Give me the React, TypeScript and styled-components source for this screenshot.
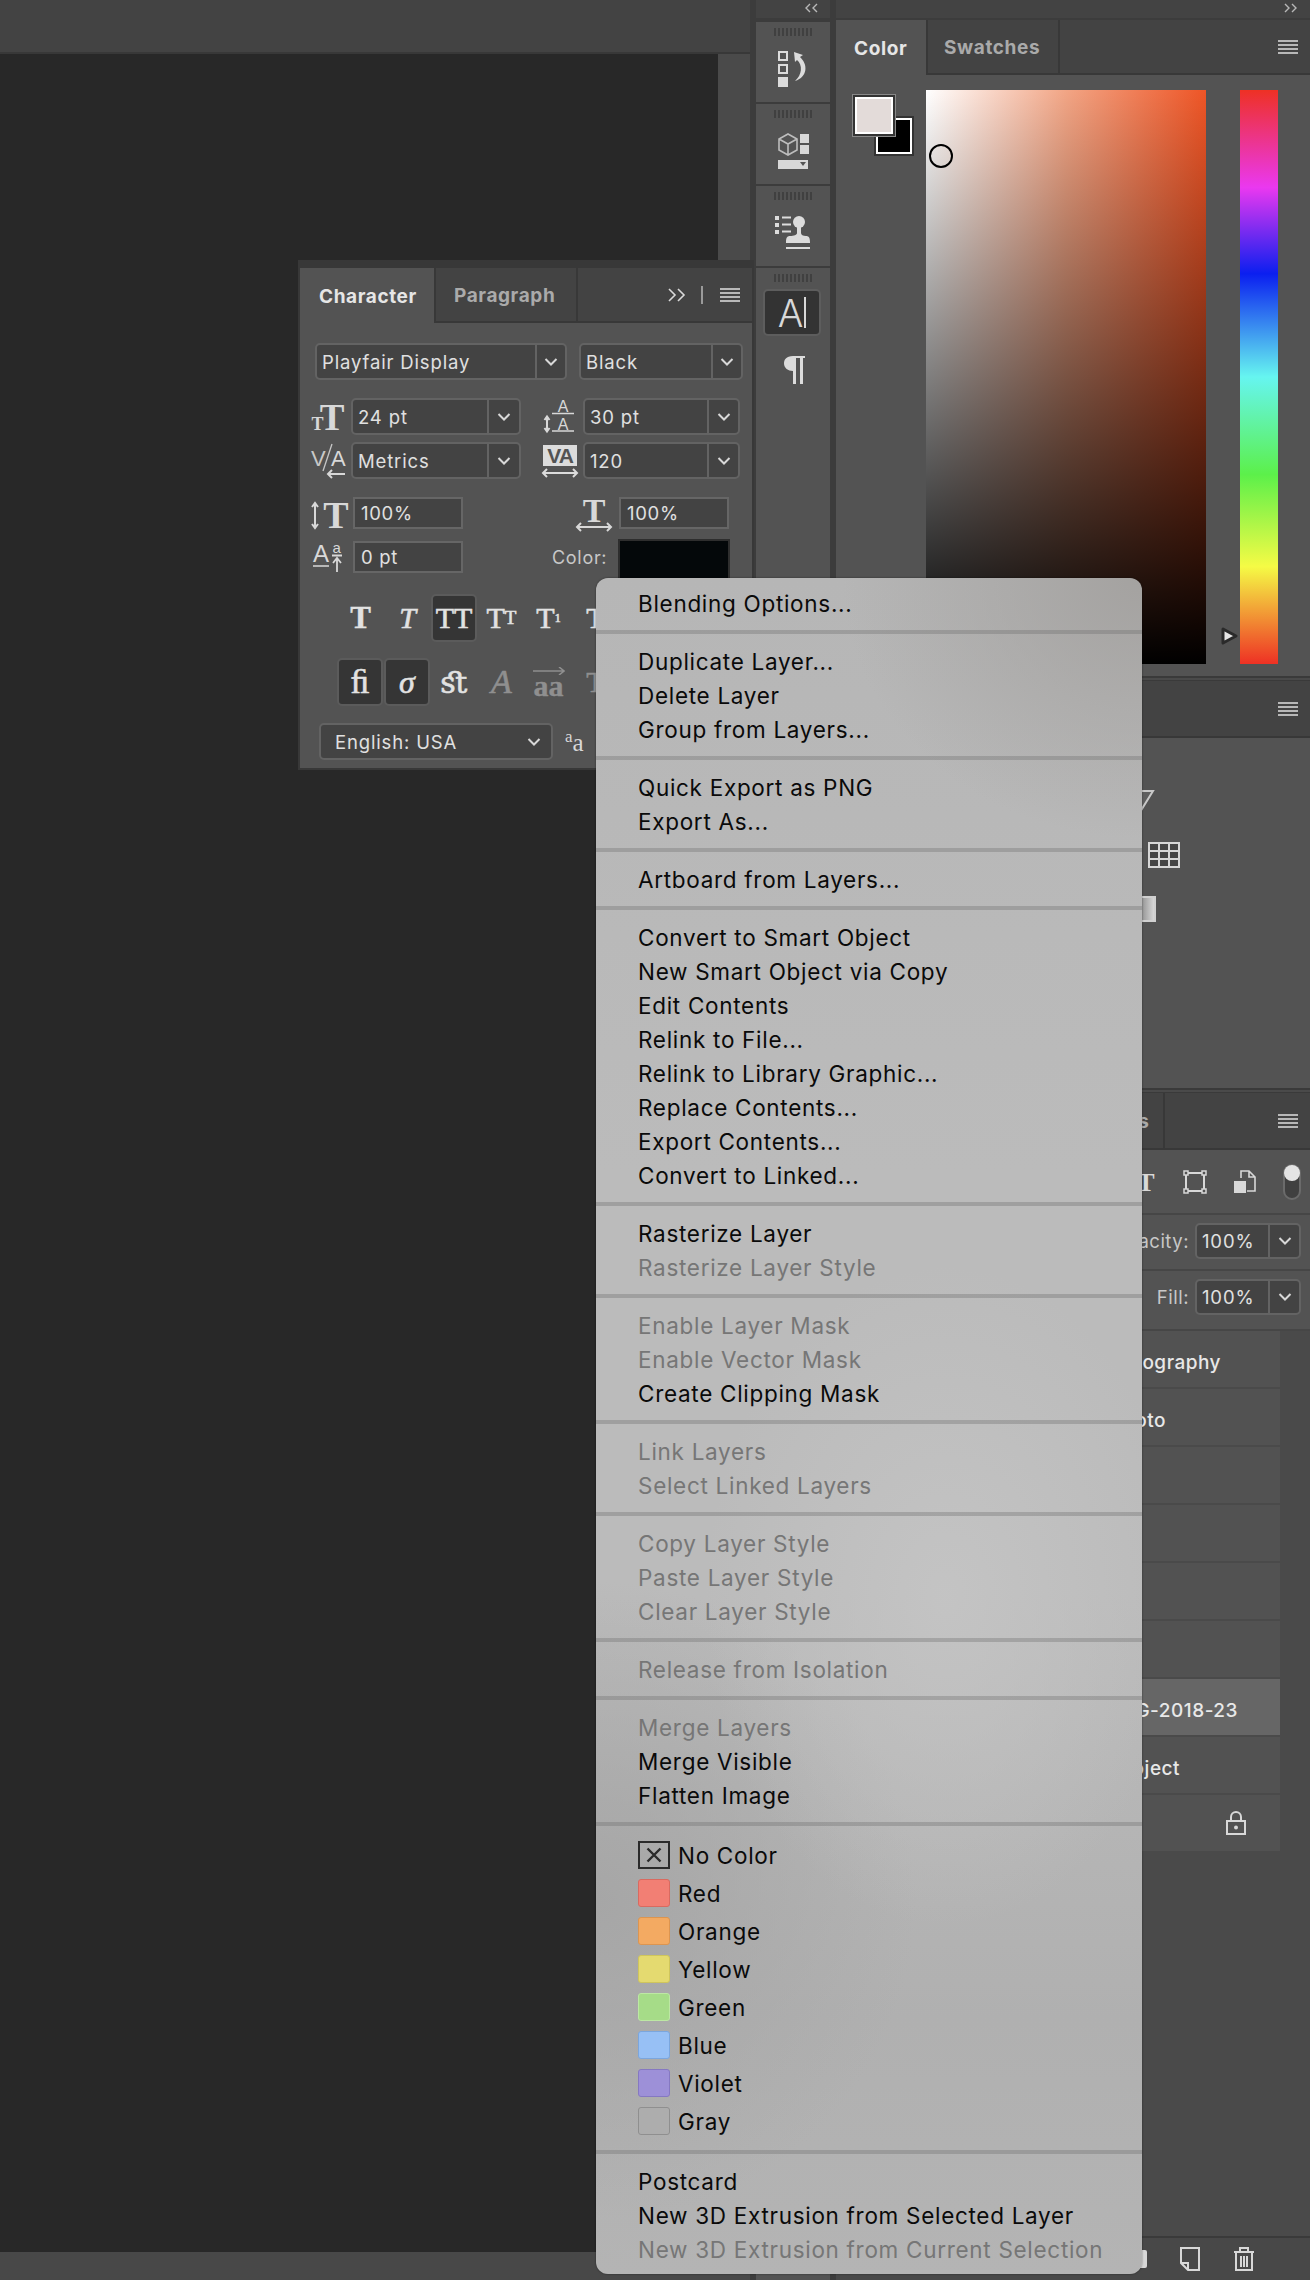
import React from 'react';
import styled, { createGlobalStyle } from 'styled-components';

const Global = createGlobalStyle`
  html, body { margin: 0; padding: 0; background: #282828; }
  body { font-family: "Inter", "Liberation Sans", sans-serif; overflow: hidden; }
  * { box-sizing: border-box; }
`;

const Page = styled.div`
  position: relative;
  width: 1310px;
  height: 2280px;
  display: flex;
  overflow: hidden;
  background: #3c3c3c;
`;

/* ---------- document area ---------- */
const DocArea = styled.div`
  width: 750px;
  display: flex;
  flex-direction: column;
`;
const OptionsBar = styled.div`
  height: 54px;
  background: #434343;
  border-bottom: 2px solid #383838;
`;
const DocMiddle = styled.div`
  flex: 1;
  display: flex;
`;
const Canvas = styled.div`
  flex: 1;
  background: #282828;
`;
const Scroller = styled.div`
  width: 32px;
  background: #4a4a4a;
`;
const StatusBar = styled.div`
  height: 28px;
  background: #484848;
`;

/* ---------- icon strip ---------- */
const Strip = styled.div`
  width: 74px;
  margin-left: 6px;
  display: flex;
  flex-direction: column;
  gap: 2px;
`;
const DockHead = styled.div`
  height: 18px;
  margin-bottom: 2px;
  flex: none;
  background: #434343;
  display: flex;
  align-items: flex-start;
  justify-content: ${p => p.$end ? 'flex-end' : 'flex-start'};
  padding: 3px ${p => p.$end ? '13px' : '0'} 0 ${p => p.$end ? '0' : '49px'};
`;
const StripGroup = styled.div`
  height: ${p => p.$grow ? 'auto' : '80px'};
  flex: ${p => p.$grow ? 1 : 'none'};
  background: #535353;
  display: flex;
  flex-direction: column;
  align-items: center;
  padding-top: 6px;
`;
const Grip = styled.div`
  width: 38px;
  height: 8px;
  flex: none;
  background: repeating-linear-gradient(90deg, #404040 0 2px, transparent 2px 4px);
`;
const StripIcon = styled.div`
  margin-top: ${p => p.$top || 15}px;
  height: 36px;
  display: flex;
  align-items: center;
  justify-content: center;
`;
const ActiveTool = styled.div`
  width: 58px;
  height: 47px;
  margin-top: 7px;
  margin-left: -2px;
  background: #333;
  border: 2px solid #5d5d5d;
  border-radius: 5px;
  display: flex;
  align-items: center;
  justify-content: center;
  color: #d8d8d8;
  font-size: 38px;
  font-weight: 300;
  line-height: 1;
`;
const Caret = styled.span`
  display: block;
  width: 2px;
  height: 31px;
  margin-left: 1px;
  background: #d8d8d8;
`;
const Pilcrow = styled.svg`
  margin-top: 18px;
  margin-left: 4px;
`;

/* ---------- panels ---------- */
const Dock = styled.div`
  width: 474px;
  margin-left: 6px;
  display: flex;
  flex-direction: column;
`;
const PanelGap = styled.div`
  height: 5px;
  flex: none;
  background: #4a4a4a;
  border-top: 2px solid #3a3a3a;
  border-bottom: 1px solid #3a3a3a;
`;
const TabBar = styled.div`
  height: ${p => p.$h || 55}px;
  flex: none;
  display: flex;
  align-items: stretch;
  background: #434343;
  border-bottom: 2px solid #383838;
`;
const Tab = styled.div`
  width: ${p => p.$w}px;
  flex: none;
  margin-bottom: ${p => p.$active ? '-2px' : '0'};
  padding: 2px 0 0 ${p => p.$pad || 18}px;
  display: flex;
  align-items: center;
  background: ${p => p.$active ? '#535353' : '#434343'};
  border-right: 2px solid #383838;
  color: ${p => p.$active ? '#e6e6e6' : '#aaaaaa'};
  font-size: 19px;
  font-weight: 700;
  letter-spacing: 0.6px;
  white-space: nowrap;
`;
const TabSpacer = styled.div`
  flex: 1;
  display: flex;
  align-items: center;
  justify-content: flex-end;
  padding-right: ${p => p.$right || 12}px;
`;
const ColorBody = styled.div`
  height: 601px;
  background: #535353;
  display: flex;
  padding: 15px 32px 0 16px;
`;
const SwatchStack = styled.div`
  position: relative;
  width: 74px;
  height: 66px;
  flex: none;
`;
const Chip = styled.div`
  position: absolute;
  left: ${p => p.$x}px;
  top: ${p => p.$y}px;
  width: ${p => p.$w}px;
  height: ${p => p.$h}px;
  background: ${p => p.$fill};
  border: 2px solid #fff;
  box-shadow: 0 0 0 2px #333${p => p.$front ? ', 0 0 0 3px #888' : ''};
`;
const Field = styled.div`
  position: relative;
  width: 280px;
  height: 574px;
  background: linear-gradient(to top, #000, rgba(0, 0, 0, 0)), linear-gradient(to right, #fff, #f2a585 50%, #ee5526);
`;
const FieldCursor = styled.div`
  position: absolute;
  left: 3px;
  top: 54px;
  width: 24px;
  height: 24px;
  border: 2px solid #000;
  border-radius: 50%;
`;
const HueWrap = styled.div`
  position: relative;
  margin-left: 34px;
  width: 38px;
  height: 574px;
`;
const Hue = styled.div`
  width: 100%;
  height: 100%;
  background: linear-gradient(to bottom, #ee3124 0%, #ea38f0 17%, #0b1ff0 32%, #66f5f0 50%, #5cf04a 67%, #f5fb45 83%, #ee3124 100%);
`;
const HueThumb = styled.svg`
  position: absolute;
  left: -21px;
  top: 536px;
`;
const AdjustBody = styled.div`
  height: 350px;
  flex: none;
  background: #535353;
  padding-top: 51px;
  display: flex;
  flex-direction: column;
`;
const AdjustIcon = styled.svg`
  display: block;
  flex: none;
  margin-left: ${p => p.$x}px;
  margin-top: ${p => p.$y}px;
`;

/* ---------- layers ---------- */
const FilterRow = styled.div`
  height: 65px;
  flex: none;
  background: #535353;
  border-bottom: 2px solid #464646;
  display: flex;
  align-items: center;
  justify-content: flex-end;
  gap: 27px;
  padding-right: 9px;
`;
const Toggle = styled.div`
  width: 18px;
  height: 36px;
  border: 2px solid #6b6b6b;
  border-radius: 9px;
  background: #404040;
  position: relative;
  &::before {
    content: '';
    position: absolute;
    left: -1px;
    top: -1px;
    width: 16px;
    height: 16px;
    border-radius: 50%;
    background: #e4e4e4;
  }
`;
const ValueRow = styled.div`
  height: ${p => p.$h}px;
  flex: none;
  background: #535353;
  border-bottom: 2px solid #464646;
  display: flex;
  align-items: flex-start;
  justify-content: flex-end;
  gap: 6px;
  padding: 8px 9px 0 0;
`;
const ValueLabel = styled.span`
  color: #c8c8c8;
  font-size: 18.5px;
  letter-spacing: 0.5px;
  line-height: 36px;
`;
const LayerArea = styled.div`
  flex: 1;
  display: flex;
  background: #4a4a4a;
  padding-right: 30px;
`;
const LayerList = styled.div`
  flex: 1;
  display: flex;
  flex-direction: column;
  gap: 2px;
  align-self: flex-start;
`;
const LayerRow = styled.div`
  height: 56px;
  display: flex;
  align-items: center;
  justify-content: flex-end;
  padding: ${p => p.$icon ? 0 : 6}px ${p => p.$end}px 0 0;
  background: ${p => p.$selected ? '#666666' : '#525252'};
  color: #e8e8e8;
  font-size: 19px;
  font-weight: 500;
  letter-spacing: 0.5px;
  white-space: nowrap;
`;
const LayersFooter = styled.div`
  height: 44px;
  flex: none;
  background: #484848;
  border-top: 2px solid #3a3a3a;
  display: flex;
  align-items: center;
  justify-content: flex-end;
  gap: 33px;
  padding-right: 55px;
`;

/* ---------- character window ---------- */
const CharWindow = styled.div`
  position: absolute;
  left: 298px;
  top: 260px;
  width: 456px;
  height: 510px;
  background: #535353;
  border: 2px solid #383838;
  border-top-width: 8px;
`;
const CharBody = styled.div`
  display: flex;
  flex-direction: column;
`;
const TopSelects = styled.div`
  display: flex;
  gap: 12px;
  padding: 20px 0 0 15px;
`;
const Select = styled.div`
  width: ${p => p.$w}px;
  height: ${p => p.$h || 37}px;
  flex: none;
  display: flex;
  background: #434343;
  border: 2px solid #636363;
  border-radius: 5px;
  color: #e0e0e0;
  font-size: 18.5px;
`;
const SelectValue = styled.div`
  flex: 1;
  display: flex;
  align-items: center;
  padding-left: ${p => p.$pad || 5}px;
  letter-spacing: 0.85px;
  white-space: nowrap;
`;
const SelectArrow = styled.div`
  width: ${p => p.$w || 30}px;
  flex: none;
  display: flex;
  align-items: center;
  justify-content: center;
  border-left: ${p => p.$plain ? 'none' : '2px solid #636363'};
`;
const FieldRow = styled.div`
  display: flex;
  align-items: center;
  padding-left: 11px;
  margin-top: ${p => p.$top}px;
`;
const RowIcon = styled.svg`
  flex: none;
  overflow: visible;
`;
const RightGroup = styled.div`
  margin-left: ${p => p.$left}px;
  display: flex;
  align-items: center;
`;
const NumberBox = styled.div`
  width: 110px;
  height: 32px;
  flex: none;
  display: flex;
  align-items: center;
  padding-left: 6px;
  background: #434343;
  border: 2px solid #666;
  color: #e0e0e0;
  font-size: 18.5px;
  letter-spacing: 0.7px;
`;
const ColorLabel = styled.span`
  width: 57px;
  flex: none;
  color: #c8c8c8;
  font-size: 18px;
  letter-spacing: 0.7px;
  white-space: nowrap;
  margin-right: 9px;
`;
const ColorSwatch = styled.div`
  width: 112px;
  height: 44px;
  flex: none;
  margin: -2px 0 -10px;
  background: #04080a;
  border: 2px solid #2e2e2e;
`;
const StyleRow = styled.div`
  display: flex;
  padding-left: 37px;
  margin-top: ${p => p.$top}px;
  height: 48px;
`;
const StyleCell = styled.div`
  width: ${p => p.$on ? 46 : 47}px;
  margin-right: ${p => p.$on ? 1 : 0}px;
  height: 48px;
  flex: none;
  display: flex;
  flex-direction: ${p => p.$stack ? 'column' : 'row'};
  align-items: center;
  justify-content: center;
  font-family: "Liberation Serif", "DejaVu Serif", serif;
  font-weight: ${p => p.$weight || 400};
  font-style: ${p => p.$italic ? 'italic' : 'normal'};
  font-size: ${p => p.$size || 30}px;
  line-height: ${p => p.$stack ? '22px' : 'normal'};
  color: ${p => p.$dim ? '#8f8f8f' : '#e2e2e2'};
  -webkit-text-stroke: ${p => p.$weight ? '0.4px' : '0.6px'};
  background: ${p => p.$on ? '#353535' : 'transparent'};
  border: ${p => p.$on ? '2px solid #5b5b5b' : 'none'};
  border-radius: ${p => p.$on ? '5px' : '0'};
  white-space: nowrap;
`;
const Small = styled.span`
  font-size: ${p => p.$size || 19}px;
  vertical-align: ${p => p.$sup ? '9px' : 'baseline'};
`;
const LanguageRow = styled.div`
  display: flex;
  align-items: center;
  padding-left: 19px;
  margin-top: 17px;
`;
const AaMark = styled.div`
  margin-left: 12px;
  font-family: "Liberation Serif", serif;
  color: #d8d8d8;
  font-size: 25px;
  line-height: 1;
`;

/* ---------- context menu ---------- */
const Menu = styled.div`
  position: absolute;
  left: 596px;
  top: 578px;
  width: 546px;
  height: 1696px;
  padding: 8px 0 7px;
  border-radius: 12px;
  box-shadow: 0 0 2px rgba(0, 0, 0, 0.5);
  background:
    radial-gradient(ellipse 240px 330px at 64% 60%, rgba(196, 196, 196, 0.95), rgba(196, 196, 196, 0)),
    radial-gradient(ellipse 300px 260px at 100% 0%, #a4a2a0, rgba(164, 162, 160, 0)),
    radial-gradient(ellipse 320px 320px at 0% 78%, #a6a6a6, rgba(166, 166, 166, 0)),
    linear-gradient(180deg, #b6b6b6 0%, #bbbbbb 35%, #bbbbbb 60%, #b0b0b0 85%, #b4b4b4 100%);
`;
const MenuItem = styled.div`
  height: 34px;
  padding-left: 42px;
  display: flex;
  align-items: center;
  font-size: 22.5px;
  letter-spacing: 0.7px;
  color: ${p => p.$off ? '#767676' : '#0a0a0a'};
  white-space: nowrap;
`;
const MenuSep = styled.div`
  height: 4px;
  margin: 10px 0;
  background: rgba(110, 110, 110, 0.35);
`;
const ColorItem = styled.div`
  height: 38px;
  padding-left: 42px;
  display: flex;
  align-items: center;
  gap: 8px;
  font-size: 22.5px;
  letter-spacing: 0.7px;
  color: #0a0a0a;
`;
const Tag = styled.span`
  width: 32px;
  height: 28px;
  flex: none;
  display: flex;
  align-items: center;
  justify-content: center;
  background: ${p => p.$fill};
  border: ${p => p.$none ? '2px solid #2a2a2a' : `1.5px solid ${p.$edge}`};
  border-radius: ${p => p.$none ? '0' : '3px'};
`;

const Chevron = () => (
  <svg width="14" height="10" viewBox="0 0 14 10">
    <path d="M1.5 2 L7 7.5 L12.5 2" fill="none" stroke="#d8d8d8" strokeWidth="2" />
  </svg>
);
const PanelMenu = () => (
  <svg width="20" height="14" viewBox="0 0 20 14">
    <path d="M0 1h20M0 5h20M0 9h20M0 13h20" stroke="#b8b8b8" strokeWidth="2" />
  </svg>
);

const SelectBox = ({ w, arrow, children, h, pad, plain }: any) => (
  <Select $w={w} $h={h}>
    <SelectValue $pad={pad}>{children}</SelectValue>
    <SelectArrow $w={arrow} $plain={plain}><Chevron /></SelectArrow>
  </Select>
);

const serif = '"Liberation Serif", serif';
const sans = '"Liberation Sans", sans-serif';

const menuGroups: Array<Array<[string, boolean?]>> = [
  [['Blending Options...']],
  [['Duplicate Layer...'], ['Delete Layer'], ['Group from Layers...']],
  [['Quick Export as PNG'], ['Export As...']],
  [['Artboard from Layers...']],
  [
    ['Convert to Smart Object'], ['New Smart Object via Copy'], ['Edit Contents'], ['Relink to File...'],
    ['Relink to Library Graphic...'], ['Replace Contents...'], ['Export Contents...'], ['Convert to Linked...'],
  ],
  [['Rasterize Layer'], ['Rasterize Layer Style', true]],
  [['Enable Layer Mask', true], ['Enable Vector Mask', true], ['Create Clipping Mask']],
  [['Link Layers', true], ['Select Linked Layers', true]],
  [['Copy Layer Style', true], ['Paste Layer Style', true], ['Clear Layer Style', true]],
  [['Release from Isolation', true]],
  [['Merge Layers', true], ['Merge Visible'], ['Flatten Image']],
];

const tags = [
  ['Red', '#f27f74', '#d96a60'],
  ['Orange', '#f3aa62', '#dc9550'],
  ['Yellow', '#e4da70', '#cfc55c'],
  ['Green', '#a6dc88', '#bde8a4'],
  ['Blue', '#97c0f5', '#7ba6dd'],
  ['Violet', '#9d90d8', '#8578c2'],
  ['Gray', '#adadad', '#8f8f8f'],
];

const layers = [
  { name: 'Typography', end: 59 },
  { name: 'Photo', end: 114 },
  { name: '', end: 0 },
  { name: '', end: 0 },
  { name: '', end: 0 },
  { name: '', end: 0 },
  { name: 'IMG-2018-23', end: 42, selected: true },
  { name: 'Smart Object', end: 100 },
];

export default function App() {
  return (
    <Page>
      <Global />
      <DocArea>
        <OptionsBar />
        <DocMiddle>
          <Canvas />
          <Scroller />
        </DocMiddle>
        <StatusBar />
      </DocArea>

      <Strip>
        <DockHead>
          <svg width="14" height="10" viewBox="0 0 14 10">
            <path d="M5 1 L1 5 L5 9 M12 1 L8 5 L12 9" fill="none" stroke="#b8b8b8" strokeWidth="1.4" />
          </svg>
        </DockHead>
        <StripGroup>
          <Grip />
          <StripIcon>
            <svg width="32" height="36" viewBox="0 0 32 36">
              <rect x="2" y="1" width="8" height="8" fill="none" stroke="#dcdcdc" strokeWidth="2" />
              <rect x="2" y="14" width="8" height="8" fill="none" stroke="#dcdcdc" strokeWidth="2" />
              <rect x="1" y="26" width="10" height="10" fill="#dcdcdc" />
              <path d="M17 1 L26 4 L23 6 C31 13 31 26 18 30 C25 24 26 14 20 9 L18 11 Z" fill="#dcdcdc" />
            </svg>
          </StripIcon>
        </StripGroup>
        <StripGroup>
          <Grip />
          <StripIcon>
            <svg width="32" height="36" viewBox="0 0 32 36">
              <path d="M11 1 L20 6 V17 L11 22 L2 17 V6 Z M2 6 L11 11 L20 6 M11 11 V22" fill="none" stroke="#bdbdbd" strokeWidth="1.6" />
              <rect x="23" y="1" width="9" height="9" fill="#d8d8d8" />
              <rect x="23" y="12" width="9" height="9" fill="#d8d8d8" />
              <rect x="1" y="27" width="30" height="9" fill="#d8d8d8" />
              <path d="M23 29 H29 L26 33 Z" fill="#555" />
            </svg>
          </StripIcon>
        </StripGroup>
        <StripGroup>
          <Grip />
          <StripIcon>
            <svg width="38" height="36" viewBox="0 0 38 36">
              <path d="M1 1h4v4H1zM1 8h4v4H1zM1 15h4v4H1z" fill="#dcdcdc" />
              <path d="M8 2.5h9M8 9.5h9M8 16.5h9" stroke="#dcdcdc" strokeWidth="2" />
              <circle cx="25" cy="7" r="6" fill="#dcdcdc" />
              <path d="M23 12h4v6c0 2 2 3 5 3 3 0 4 2 4 6v1H12v-1c0-4 1-6 4-6 4 0 7-1 7-3z" fill="#dcdcdc" />
              <rect x="12" y="32" width="24" height="2" fill="#dcdcdc" />
            </svg>
          </StripIcon>
        </StripGroup>
        <StripGroup $grow>
          <Grip />
          <ActiveTool>A<Caret /></ActiveTool>
          <Pilcrow width="24" height="31" viewBox="0 0 24 31">
            <path d="M22 2 H10 C3 2 1 6 1 9.5 C1 14 5 17 10 17 V30 H13 V4 H17 V30 H20 V4 H22 Z" fill="#dcdcdc" />
          </Pilcrow>
        </StripGroup>
      </Strip>

      <Dock>
        <DockHead $end>
          <svg width="14" height="10" viewBox="0 0 14 10">
            <path d="M2 1 L6 5 L2 9 M9 1 L13 5 L9 9" fill="none" stroke="#b8b8b8" strokeWidth="1.4" />
          </svg>
        </DockHead>
        <TabBar>
          <Tab $active $w={92} $pad={18}>Color</Tab>
          <Tab $w={132} $pad={16}>Swatches</Tab>
          <TabSpacer><PanelMenu /></TabSpacer>
        </TabBar>
        <ColorBody>
          <SwatchStack>
            <Chip $x={24} $y={28} $w={36} $h={36} $fill="#000" />
            <Chip $x={3} $y={7} $w={38} $h={37} $fill="#e3dbd9" $front />
          </SwatchStack>
          <Field><FieldCursor /></Field>
          <HueWrap>
            <Hue />
            <HueThumb width="20" height="20" viewBox="0 0 20 20">
              <path d="M4 3 L17 10 L4 17 Z" fill="#e6e6e6" stroke="#2a2a2a" strokeWidth="3" strokeLinejoin="round" />
            </HueThumb>
          </HueWrap>
        </ColorBody>
        <PanelGap />
        <TabBar $h={57}>
          <TabSpacer><PanelMenu /></TabSpacer>
        </TabBar>
        <AdjustBody>
          <AdjustIcon $x={289} $y={0} width="30" height="25" viewBox="0 0 30 25">
            <path d="M2 2 H28 L15 23 Z" fill="#5f5f5f" stroke="#c8c8c8" strokeWidth="2" />
          </AdjustIcon>
          <AdjustIcon $x={312} $y={28} width="32" height="26" viewBox="0 0 32 26">
            <rect x="1" y="1" width="30" height="24" fill="#444" stroke="#d6d6d6" strokeWidth="2" />
            <path d="M11 1v24M21 1v24M1 9h30M1 17h30" stroke="#d6d6d6" strokeWidth="2" />
          </AdjustIcon>
          <AdjustIcon $x={290} $y={28} width="30" height="26" viewBox="0 0 30 26">
            <defs>
              <linearGradient id="adj-grad" x1="0" x2="1">
                <stop offset="0" stopColor="#444" />
                <stop offset="1" stopColor="#ddd" />
              </linearGradient>
            </defs>
            <rect x="1" y="1" width="28" height="24" fill="url(#adj-grad)" stroke="#d0d0d0" strokeWidth="2" />
          </AdjustIcon>
        </AdjustBody>
        <PanelGap />
        <TabBar $h={57}>
          <Tab $w={329} $pad={258}>Paths</Tab>
          <TabSpacer><PanelMenu /></TabSpacer>
        </TabBar>
        <FilterRow>
          <svg width="20" height="22" viewBox="0 0 20 22">
            <text x="10" y="20" textAnchor="middle" fontFamily={serif} fontWeight="700" fontSize="26" fill="#d8d8d8">T</text>
          </svg>
          <svg width="24" height="24" viewBox="0 0 24 24">
            <rect x="3" y="3" width="18" height="18" fill="none" stroke="#d8d8d8" strokeWidth="2" />
            <path d="M1 1h4v4H1zM19 1h4v4h-4zM1 19h4v4H1zM19 19h4v4h-4z" fill="#535353" stroke="#d8d8d8" strokeWidth="1.5" />
          </svg>
          <svg width="22" height="24" viewBox="0 0 22 24">
            <path d="M7 8 V1 H15 L21 7 V21 H13 M15 1 V7 H21" fill="none" stroke="#d8d8d8" strokeWidth="1.6" />
            <rect x="0" y="11" width="12" height="12" fill="#d8d8d8" />
          </svg>
          <Toggle />
        </FilterRow>
        <ValueRow $h={56}>
          <ValueLabel>Opacity:</ValueLabel>
          <SelectBox w={106} arrow={31} h={36}>100%</SelectBox>
        </ValueRow>
        <ValueRow $h={60}>
          <ValueLabel>Fill:</ValueLabel>
          <SelectBox w={106} arrow={31} h={36}>100%</SelectBox>
        </ValueRow>
        <LayerArea>
          <LayerList>
            {layers.map((l, i) => (
              <LayerRow key={i} $end={l.end} $selected={l.selected}>{l.name}</LayerRow>
            ))}
            <LayerRow $end={34} $icon>
              <svg width="20" height="24" viewBox="0 0 20 24">
                <path d="M5 10 V6 a5 5 0 0 1 10 0 V10" fill="none" stroke="#d8d8d8" strokeWidth="2" />
                <rect x="1" y="10" width="18" height="13" fill="none" stroke="#d8d8d8" strokeWidth="2" />
                <circle cx="10" cy="16.5" r="2" fill="#d8d8d8" />
              </svg>
            </LayerRow>
          </LayerList>
        </LayerArea>
        <LayersFooter>
          <svg width="20" height="24" viewBox="0 0 20 24">
            <rect x="0" y="3" width="20" height="18" rx="2" fill="#d8d8d8" />
          </svg>
          <svg width="20" height="24" viewBox="0 0 20 24">
            <path d="M1 16 V1 H19 V23 H8 Z M1 16 H8 V23" fill="none" stroke="#d8d8d8" strokeWidth="2" />
          </svg>
          <svg width="22" height="24" viewBox="0 0 22 24">
            <path d="M3 6 V23 H19 V6 M1 5 H21 M7 5 V1 H15 V5 M8 9 V20 M11 9 V20 M14 9 V20" fill="none" stroke="#d8d8d8" strokeWidth="2" />
          </svg>
        </LayersFooter>
      </Dock>

      <CharWindow>
        <TabBar>
          <Tab $active $w={136} $pad={19}>Character</Tab>
          <Tab $w={142} $pad={18}>Paragraph</Tab>
          <TabSpacer $right={12}>
            <svg width="18" height="14" viewBox="0 0 18 14">
              <path d="M1 1 L7 7 L1 13 M10 1 L16 7 L10 13" fill="none" stroke="#dadada" strokeWidth="1.6" />
            </svg>
            <svg width="34" height="20" viewBox="0 0 34 20">
              <path d="M16 1 V19" stroke="#9a9a9a" strokeWidth="2" />
            </svg>
            <PanelMenu />
          </TabSpacer>
        </TabBar>
        <CharBody>
          <TopSelects>
            <SelectBox w={252} arrow={30}>Playfair Display</SelectBox>
            <SelectBox w={164} arrow={30}>Black</SelectBox>
          </TopSelects>

          <FieldRow $top={18}>
            <RowIcon width="40" height="34" viewBox="0 0 40 34">
              <text x="6.5" y="30" fontFamily={serif} fontWeight="700" fontSize="18" fill="#d8d8d8" textAnchor="middle">T</text>
              <text x="21" y="30" fontFamily={serif} fontWeight="700" fontSize="37" fill="#d8d8d8" textAnchor="middle">T</text>
            </RowIcon>
            <SelectBox w={170} arrow={32}>24 pt</SelectBox>
            <RightGroup $left={22}>
              <RowIcon width="40" height="36" viewBox="0 0 40 36">
                <text x="20" y="13" fontFamily={sans} fontSize="16" fill="#d8d8d8" textAnchor="middle">A</text>
                <path d="M9 14.5h22M9 32h22" stroke="#d8d8d8" strokeWidth="1.5" />
                <text x="20" y="30.5" fontFamily={sans} fontSize="16" fill="#d8d8d8" textAnchor="middle">A</text>
                <path d="M4 18 V32 M1.5 21 L4 17.5 L6.5 21 M1.5 29 L4 32.5 L6.5 29" fill="none" stroke="#d8d8d8" strokeWidth="2" />
              </RowIcon>
              <SelectBox w={157} arrow={31}>30 pt</SelectBox>
            </RightGroup>
          </FieldRow>

          <FieldRow $top={7}>
            <RowIcon width="40" height="34" viewBox="0 0 40 34">
              <text x="0" y="22" fontFamily={sans} fontSize="22" fill="#c8c8c8">V</text>
              <path d="M21 0 L12 27" stroke="#c8c8c8" strokeWidth="1.3" />
              <text x="20" y="22" fontFamily={sans} fontSize="22" fill="#d8d8d8">A</text>
              <path d="M17 30 H34 M21 26 L17 30 L21 34" fill="none" stroke="#d8d8d8" strokeWidth="2" />
            </RowIcon>
            <SelectBox w={170} arrow={32}>Metrics</SelectBox>
            <RightGroup $left={22}>
              <RowIcon width="40" height="36" viewBox="0 0 40 36">
                <rect x="0" y="2" width="34" height="21" fill="#dcdcdc" />
                <text x="17" y="20" fontFamily={sans} fontWeight="700" fontSize="21" letterSpacing="-1" fill="#535353" textAnchor="middle">VA</text>
                <path d="M0 30 H34 M4 26 L0 30 L4 34 M30 26 L34 30 L30 34" fill="none" stroke="#dcdcdc" strokeWidth="2" />
              </RowIcon>
              <SelectBox w={157} arrow={31}>120</SelectBox>
            </RightGroup>
          </FieldRow>

          <FieldRow $top={18}>
            <RowIcon width="42" height="32" viewBox="0 0 42 32">
              <path d="M4 6 V31 M1 10 L4 6 L7 10 M1 27 L4 31 L7 27" fill="none" stroke="#d8d8d8" strokeWidth="2" />
              <text x="25" y="31" fontFamily={serif} fontWeight="700" fontSize="38" fill="#d8d8d8" textAnchor="middle">T</text>
            </RowIcon>
            <NumberBox>100%</NumberBox>
            <RightGroup $left={112}>
              <RowIcon width="44" height="32" viewBox="0 0 44 32">
                <text x="19" y="25" fontFamily={serif} fontWeight="700" fontSize="34" fill="#d8d8d8" textAnchor="middle">T</text>
                <path d="M2 30 H36 M6 26 L2 30 L6 34 M32 26 L36 30 L32 34" fill="none" stroke="#d8d8d8" strokeWidth="2" />
              </RowIcon>
              <NumberBox>100%</NumberBox>
            </RightGroup>
          </FieldRow>

          <FieldRow $top={12}>
            <RowIcon width="42" height="32" viewBox="0 0 42 32">
              <text x="2" y="21" fontFamily={sans} fontSize="24" fill="#d8d8d8">A</text>
              <path d="M2 25 H18" stroke="#d8d8d8" strokeWidth="1.5" />
              <text x="21.5" y="12" fontFamily={sans} fontSize="15" fill="#d8d8d8">a</text>
              <path d="M21 14.5 H31 M26 31 V18 M22 22 L26 17 L30 22" fill="none" stroke="#d8d8d8" strokeWidth="1.8" />
            </RowIcon>
            <NumberBox>0 pt</NumberBox>
            <RightGroup $left={89}>
              <ColorLabel>Color:</ColorLabel>
              <ColorSwatch />
            </RightGroup>
          </FieldRow>

          <StyleRow $top={21}>
            <StyleCell $size={31} $weight={700}>T</StyleCell>
            <StyleCell $size={30} $italic>T</StyleCell>
            <StyleCell $on $size={30}>TT</StyleCell>
            <StyleCell $size={30}>T<Small>T</Small></StyleCell>
            <StyleCell $size={30}>T<Small $size={12} $sup>1</Small></StyleCell>
            <StyleCell $size={30}>T</StyleCell>
          </StyleRow>
          <StyleRow $top={16}>
            <StyleCell $on $size={34}>ﬁ</StyleCell>
            <StyleCell $on $size={32} $italic>σ</StyleCell>
            <StyleCell $size={30}>ﬆ</StyleCell>
            <StyleCell $size={34} $italic $dim>A</StyleCell>
            <StyleCell $size={30} $weight={700} $dim $stack>
              <svg width="32" height="8" viewBox="0 0 32 8">
                <path d="M0 4 H31 M26 0 L31 4 L26 8" fill="none" stroke="#8f8f8f" strokeWidth="1.6" />
              </svg>
              aa
            </StyleCell>
            <StyleCell $size={30} $dim>T</StyleCell>
          </StyleRow>

          <LanguageRow>
            <SelectBox w={234} arrow={34} pad={14} plain>English: USA</SelectBox>
            <AaMark><Small $size={17} $sup>a</Small>a</AaMark>
          </LanguageRow>
        </CharBody>
      </CharWindow>

      <Menu>
        {menuGroups.map((group, i) => (
          <React.Fragment key={i}>
            {group.map(([label, off]) => <MenuItem key={label} $off={off}>{label}</MenuItem>)}
            <MenuSep />
          </React.Fragment>
        ))}
        <ColorItem>
          <Tag $none $fill="transparent">
            <svg width="16" height="16" viewBox="0 0 16 16">
              <path d="M1.5 1.5 L14.5 14.5 M14.5 1.5 L1.5 14.5" stroke="#2a2a2a" strokeWidth="2.4" />
            </svg>
          </Tag>
          No Color
        </ColorItem>
        {tags.map(([name, fill, edge]) => (
          <ColorItem key={name}><Tag $fill={fill} $edge={edge} />{name}</ColorItem>
        ))}
        <MenuSep />
        <MenuItem>Postcard</MenuItem>
        <MenuItem>New 3D Extrusion from Selected Layer</MenuItem>
        <MenuItem $off>New 3D Extrusion from Current Selection</MenuItem>
      </Menu>
    </Page>
  );
}
